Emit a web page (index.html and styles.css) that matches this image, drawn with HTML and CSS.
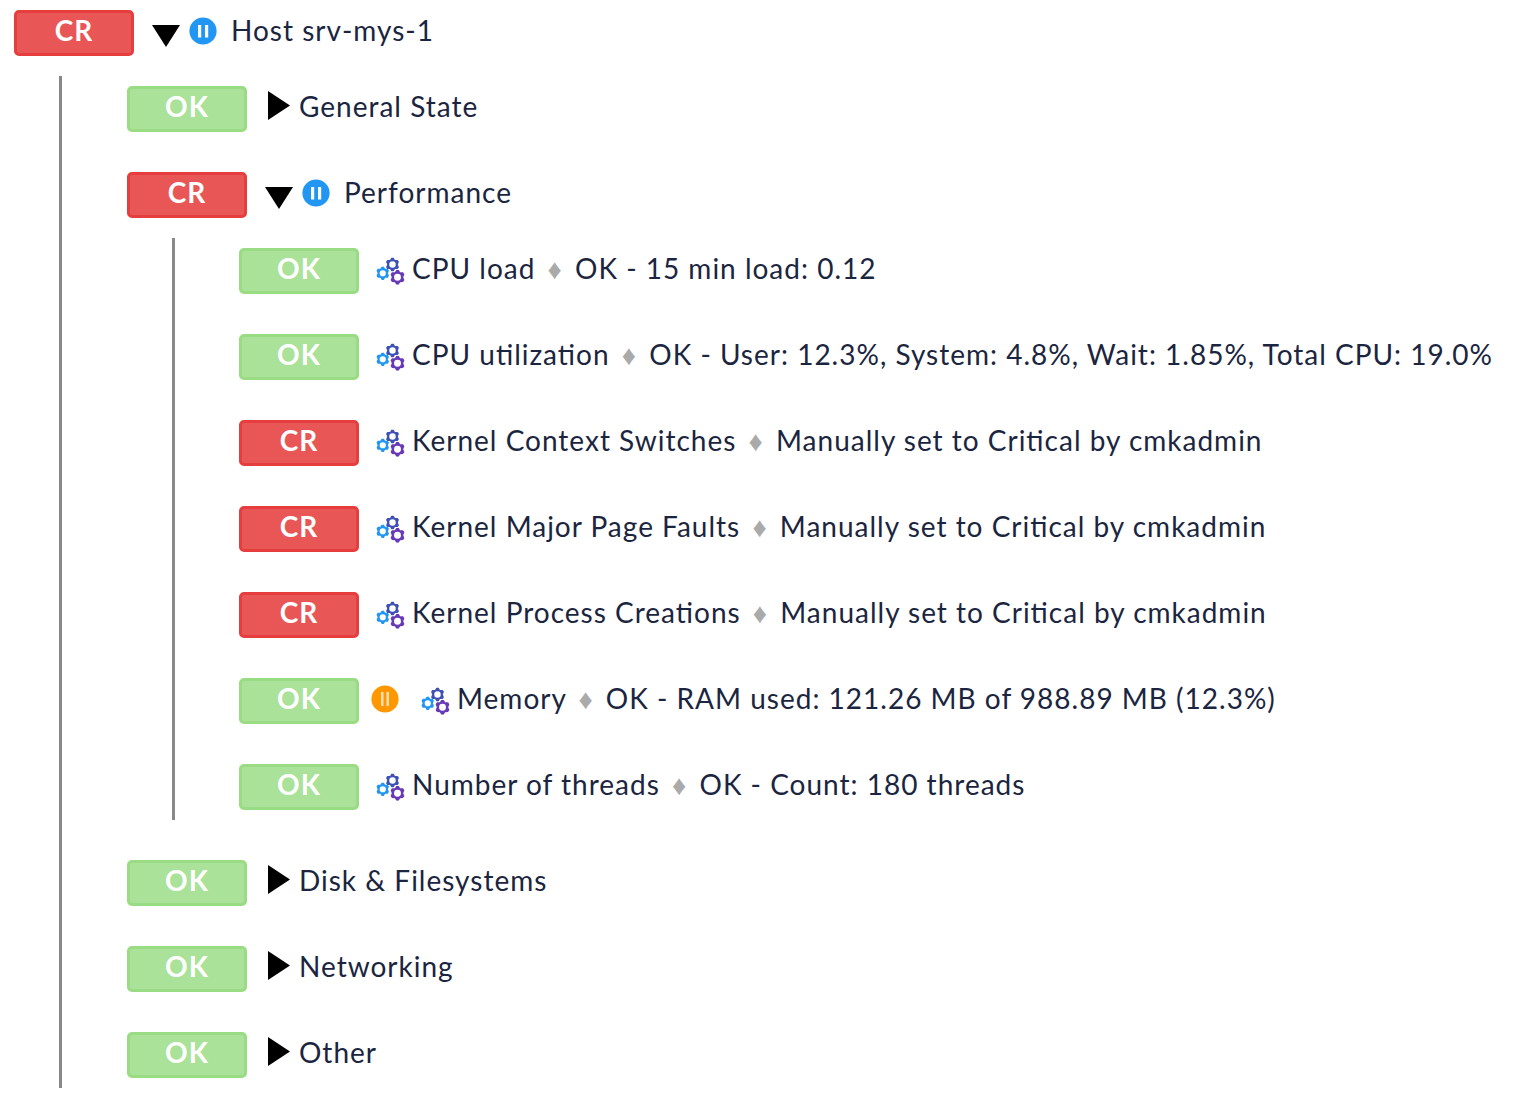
FILE: index.html
```html
<!DOCTYPE html>
<html lang="en">
<head>
<meta charset="utf-8">
<meta name="viewport" content="width=device-width, initial-scale=1">
<title>Host srv-mys-1</title>
<link rel="stylesheet" href="styles.css">
</head>
<body>
<svg class="sprite" aria-hidden="true">
  <symbol id="down" viewBox="0 0 28 34"><path d="M0 11h28L14 33z"/></symbol>
  <symbol id="right" viewBox="0 0 28 34"><path d="M3 1v29l22-14.500z"/></symbol>
  <symbol id="pause" viewBox="0 0 28 28"><circle cx="14" cy="14" r="13.600"/><path class="bars" d="M9 8h3.200v12.500H9zM16 8h3.200v12.500H16z"/></symbol>
  <symbol id="pause-ack" viewBox="0 0 28 28"><circle cx="14" cy="14" r="13.600"/><path fill="#ffe0b2" d="M10 7h2.500v14H10zM15.500 7H18v14h-2.500z"/></symbol>
  <symbol id="gear" viewBox="-10 -10 20 20">
    <path fill="currentColor" fill-rule="evenodd" d="M-1.500-10h3L3.500-6.600 7.400-6.500 9.200-3.800 7.600 0 9.200 3.800 7.400 6.500 3.500 6.600 1.500 10h-3L-3.500 6.600-7.400 6.500-9.200 3.800-7.600 0-9.200-3.800-7.400-6.500-3.500-6.600zM0-4.600a4.600 4.600 0 1 0 0 9.200 4.600 4.600 0 1 0 0-9.200z"/>
  </symbol>
  <symbol id="gears" viewBox="0 0 29 28">
    <use href="#gear" x="9.500" y="0.500" width="14" height="14" color="#3f51b5"/>
    <use href="#gear" x="0" y="9.500" width="13.500" height="13.500" color="#2196f3"/>
    <use href="#gear" x="14" y="12.700" width="15" height="15" color="#673ab7"/>
  </symbol>
</svg>
<main class="tree">
  <div class="row"><span class="state cr">CR</span><button class="toggle" aria-label="Collapse"><svg><use href="#down"/></svg></button><svg class="pause"><use href="#pause"/></svg><span class="label">Host srv-mys-1</span></div>
  <ul class="branch">
    <li><div class="row"><span class="state ok">OK</span><button class="toggle" aria-label="Expand"><svg><use href="#right"/></svg></button><span class="label">General State</span></div></li>
    <li>
      <div class="row"><span class="state cr">CR</span><button class="toggle" aria-label="Collapse"><svg><use href="#down"/></svg></button><svg class="pause"><use href="#pause"/></svg><span class="label">Performance</span></div>
      <ul class="branch">
        <li><div class="row"><span class="state ok">OK</span><svg class="gears"><use href="#gears"/></svg><span class="label">CPU load <span class="sep">♦</span> OK - 15 min load: 0.12</span></div></li>
        <li><div class="row"><span class="state ok">OK</span><svg class="gears"><use href="#gears"/></svg><span class="label">CPU utilization <span class="sep">♦</span> OK - User: 12.3%, System: 4.8%, Wait: 1.85%, Total CPU: 19.0%</span></div></li>
        <li><div class="row"><span class="state cr">CR</span><svg class="gears"><use href="#gears"/></svg><span class="label">Kernel Context Switches <span class="sep">♦</span> Manually set to Critical by cmkadmin</span></div></li>
        <li><div class="row"><span class="state cr">CR</span><svg class="gears"><use href="#gears"/></svg><span class="label">Kernel Major Page Faults <span class="sep">♦</span> Manually set to Critical by cmkadmin</span></div></li>
        <li><div class="row"><span class="state cr">CR</span><svg class="gears"><use href="#gears"/></svg><span class="label">Kernel Process Creations <span class="sep">♦</span> Manually set to Critical by cmkadmin</span></div></li>
        <li><div class="row"><span class="state ok">OK</span><svg class="pause ack"><use href="#pause-ack"/></svg><svg class="gears"><use href="#gears"/></svg><span class="label">Memory <span class="sep">♦</span> OK - RAM used: 121.26 MB of 988.89 MB (12.3%)</span></div></li>
        <li><div class="row"><span class="state ok">OK</span><svg class="gears"><use href="#gears"/></svg><span class="label">Number of threads <span class="sep">♦</span> OK - Count: 180 threads</span></div></li>
      </ul>
    </li>
    <li><div class="row"><span class="state ok">OK</span><button class="toggle" aria-label="Expand"><svg><use href="#right"/></svg></button><span class="label">Disk &amp; Filesystems</span></div></li>
    <li><div class="row"><span class="state ok">OK</span><button class="toggle" aria-label="Expand"><svg><use href="#right"/></svg></button><span class="label">Networking</span></div></li>
    <li><div class="row"><span class="state ok">OK</span><button class="toggle" aria-label="Expand"><svg><use href="#right"/></svg></button><span class="label">Other</span></div></li>
  </ul>
</main>
</body>
</html>
```
FILE: styles.css
```css
* { box-sizing: border-box; }
body {
  margin: 0;
  background: #fff;
  color: #1b2540;
  font: 28px/40px Lato, sans-serif;
  letter-spacing: 1px;
  font-feature-settings: "liga" 1;
}
.sprite { position: absolute; width: 0; height: 0; }
.tree { padding: 10px 14px; }
.branch {
  display: flex;
  flex-direction: column;
  gap: 40px;
  margin: 20px 0 0 45px;
  padding: 10px 0 10px 65px;
  border-left: 3px solid #888;
  list-style: none;
}
.branch .branch { padding-left: 64px; }
.row {
  display: flex;
  align-items: flex-start;
  min-height: 46px;
  white-space: nowrap;
}
.row svg { display: block; flex: none; }
.state {
  flex: none;
  width: 120px;
  height: 46px;
  border: 3px solid;
  border-radius: 5px;
  color: #fff;
  font-weight: 700;
  line-height: 34px;
  text-align: center;
}
.ok { background: #a9e298; border-color: #9adc84; }
.cr { background: #e85656; border-color: #e63e3e; }
.toggle {
  flex: none;
  margin: 4px 6px 0 18px;
  padding: 0;
  border: 0;
  background: none;
  cursor: pointer;
}
.toggle svg { width: 28px; height: 34px; }
.pause { width: 28px; height: 28px; margin: 7px 14px 0 3px; fill: #2196f3; }
.bars { fill: #fff; }
.pause.ack { margin: 7px 4px 0 12px; fill: #ff9800; }
.pause.ack + .gears { margin-left: 18px; }
.gears { width: 29px; height: 28px; margin: 9px 7px 0 17px; }
.sep { color: #aaa; margin: 0 4px; }
```
